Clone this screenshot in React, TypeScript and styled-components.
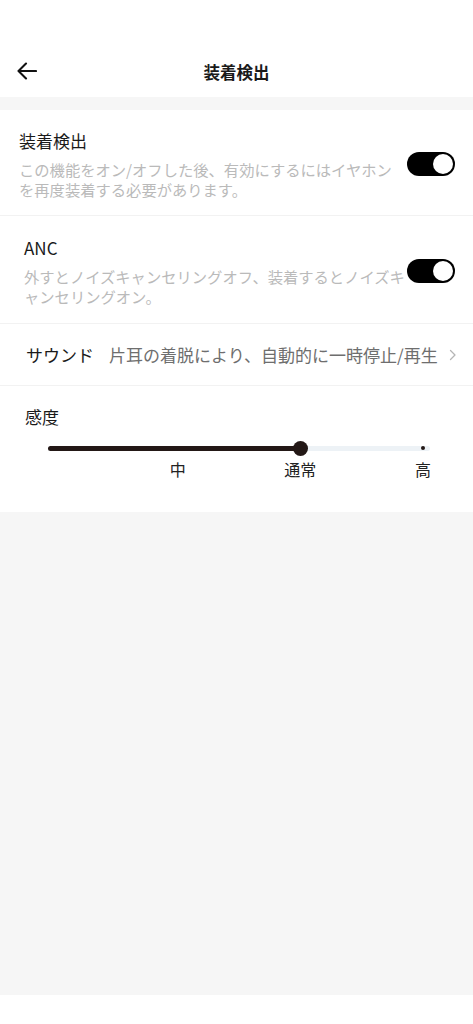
import React from "react";
import styled, { createGlobalStyle } from "styled-components";

const GlobalStyle = createGlobalStyle`
  body {
    margin: 0;
    font-family: "Noto Sans CJK JP", "Noto Sans", sans-serif;
    color: #1a1a1a;
  }
`;

const stops = [
  { label: "", pos: 7 },
  { label: "中", pos: 129.7 },
  { label: "通常", pos: 252.3 },
  { label: "高", pos: 375 }
];

const App = () => {
  const current = 2;
  const thumbPos = stops[current].pos;

  return (
    <Page>
      <GlobalStyle />
      <Header>
        <BackButton aria-label="back">
          <svg width="20" height="18" viewBox="0 0 20 18" fill="none">
            <path
              d="M19 9H2M9 1.5L1.5 9L9 16.5"
              stroke="#111"
              strokeWidth="2.1"
              strokeLinecap="round"
              strokeLinejoin="round"
            />
          </svg>
        </BackButton>
        <Title>装着検出</Title>
      </Header>

      <Card>
        <ToggleRow $inset={19} $top={19} $bottom={16}>
          <RowText>
            <RowTitle>装着検出</RowTitle>
            <Description>
              この機能をオン/オフした後、有効にするにはイヤホン
              <br />
              を再度装着する必要があります。
            </Description>
          </RowText>
          <Switch $on />
        </ToggleRow>

        <ToggleRow $inset={24} $top={20} $bottom={17}>
          <RowText>
            <RowTitle>ANC</RowTitle>
            <Description>
              外すとノイズキャンセリングオフ、装着するとノイズキ
              <br />
              ャンセリングオン。
            </Description>
          </RowText>
          <Switch $on />
        </ToggleRow>

        <LinkRow>
          <LinkLabel>サウンド</LinkLabel>
          <LinkValue>片耳の着脱により、自動的に一時停止/再生</LinkValue>
          <svg width="8" height="12" viewBox="0 0 8 12" fill="none">
            <path
              d="M1.5 1.5L6 6L1.5 10.5"
              stroke="#b5b5b5"
              strokeWidth="1.3"
              strokeLinecap="round"
              strokeLinejoin="round"
            />
          </svg>
        </LinkRow>

        <SliderRow>
          <RowTitle>感度</RowTitle>
          <SliderBox>
            <Track>
              <Fill style={{ width: thumbPos }} />
            </Track>
            <EndDot style={{ left: stops[stops.length - 1].pos }} />
            <Thumb style={{ left: thumbPos }} />
          </SliderBox>
          <Labels>
            {stops.map((s, i) =>
              s.label ? (
                <StopLabel key={i} style={{ left: s.pos }}>
                  {s.label}
                </StopLabel>
              ) : null
            )}
          </Labels>
        </SliderRow>
      </Card>

      <Filler />
      <BottomBar />
    </Page>
  );
};

export default App;

const Page = styled.div`
  display: flex;
  flex-direction: column;
  height: 1024px;
  background: #f6f6f6;
`;

const Header = styled.header`
  position: relative;
  display: flex;
  align-items: center;
  justify-content: center;
  height: 51px;
  padding-top: 46px;
  margin-bottom: 13px;
  background: #fff;
`;

const BackButton = styled.button`
  position: absolute;
  left: 17px;
  top: 62px;
  display: flex;
  padding: 0;
  border: 0;
  background: none;
`;

const Title = styled.h1`
  margin: 0;
  font-size: 16.5px;
  font-weight: 700;
  line-height: 24px;
  color: #1a1a1a;
`;

const Card = styled.section`
  background: #fff;
`;

const ToggleRow = styled.div<{ $inset: number; $top: number; $bottom: number }>`
  display: flex;
  align-items: center;
  justify-content: space-between;
  padding: ${(p) => `${p.$top}px 18px ${p.$bottom}px ${p.$inset}px`};
  border-bottom: 1px solid #f2f2f2;
`;

const RowText = styled.div`
  display: flex;
  flex-direction: column;
  gap: 6px;
  margin-right: -40px;
`;

const RowTitle = styled.div`
  font-size: 17px;
  line-height: 24px;
  color: #1a1a1a;
`;

const Description = styled.div`
  font-size: 15.3px;
  line-height: 20px;
  color: #bababa;
  white-space: nowrap;
`;

const Switch = styled.div<{ $on?: boolean }>`
  position: relative;
  z-index: 1;
  flex-shrink: 0;
  width: 48px;
  height: 24px;
  border-radius: 12px;
  background: ${(p) => (p.$on ? "#000" : "#ddd")};

  &::after {
    content: "";
    position: absolute;
    top: 2px;
    left: ${(p) => (p.$on ? "26px" : "2px")};
    width: 20px;
    height: 20px;
    border-radius: 50%;
    background: #fff;
  }
`;

const LinkRow = styled.div`
  display: flex;
  align-items: center;
  height: 61px;
  padding: 0 16px 0 26px;
  border-bottom: 1px solid #f2f2f2;
`;

const LinkLabel = styled.span`
  font-size: 17px;
  color: #1a1a1a;
  margin-right: 15px;
`;

const LinkValue = styled.span`
  flex: 1;
  font-size: 17px;
  color: #6e6e6e;
  white-space: nowrap;
`;

const SliderRow = styled.div`
  padding: 19px 18px 32px 25px;
`;

const SliderBox = styled.div`
  position: relative;
  width: 382px;
  height: 14px;
  margin: 12px 0 0 23px;
  display: flex;
  align-items: center;
`;

const Track = styled.div`
  width: 100%;
  height: 5px;
  border-radius: 3px;
  background: #edf2f6;
`;

const Fill = styled.div`
  height: 100%;
  border-radius: 3px;
  background: #231816;
`;

const Thumb = styled.div`
  position: absolute;
  top: 0;
  width: 15px;
  height: 15px;
  margin-left: -7.5px;
  border-radius: 50%;
  background: #231816;
`;

const EndDot = styled.div`
  position: absolute;
  top: 5px;
  width: 4px;
  height: 4px;
  margin-left: -2px;
  border-radius: 50%;
  background: #231816;
`;

const Labels = styled.div`
  position: relative;
  height: 22px;
  margin: 3px 0 0 23px;
`;

const StopLabel = styled.span`
  position: absolute;
  top: 0;
  transform: translateX(-50%);
  font-size: 16px;
  line-height: 22px;
  color: #222;
  white-space: nowrap;
`;

const Filler = styled.div`
  flex: 1;
`;

const BottomBar = styled.div`
  height: 29px;
  background: #fff;
`;
